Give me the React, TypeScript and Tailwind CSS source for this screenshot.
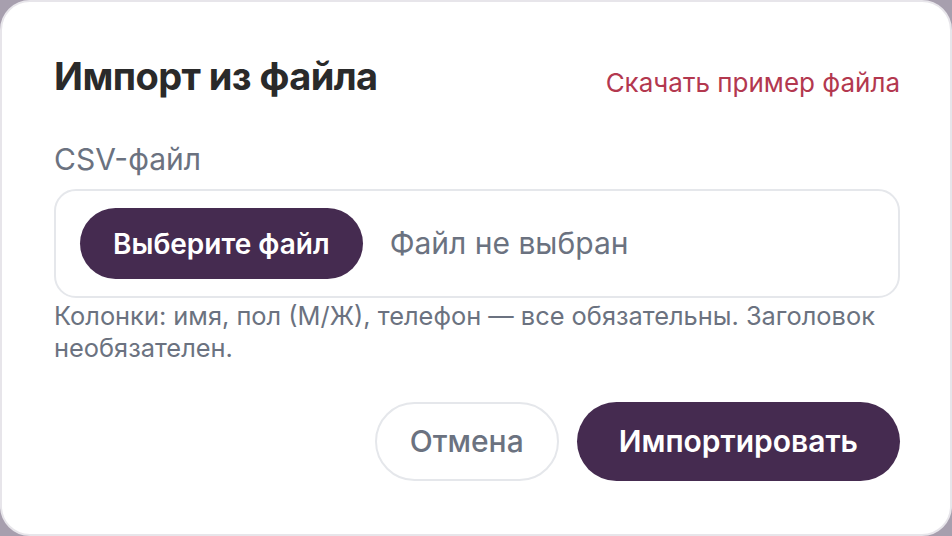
export default function App() {
  return (
    <div className="h-[536px] w-[952px] bg-[#a79fae] font-['Inter',sans-serif]">
      <div className="flex h-full flex-col rounded-[30px] border-2 border-[#e7e5ea] bg-white pl-[52px] pr-[50px] pt-[52px]">
        <div className="flex items-baseline justify-between">
          <h2 className="text-[38px] leading-[44px] font-bold tracking-[-0.015em] text-[#2a2a2a]">
            Импорт из файла
          </h2>
          <a href="#" className="relative top-[2px] text-[26px] leading-[44px] text-[#b3384f]">
            Скачать пример файла
          </a>
        </div>

        <label className="mt-[38px] text-[30px] leading-[36px] text-[#6b7280]">CSV-файл</label>

        <div className="mt-[12px] flex h-[109px] items-center gap-[27px] rounded-[22px] border-2 border-[#e5e7eb] pl-[24px]">
          <button className="h-[71px] rounded-full bg-[#452b50] px-[33px] text-[28px] font-semibold text-white">
            Выберите файл
          </button>
          <span className="text-[30px] text-[#6b7280]">Файл не выбран</span>
        </div>

        <p className="mt-[2px] text-[25.4px] leading-[32px] text-[#6b7280]">
          Колонки: имя, пол (М/Ж), телефон — все обязательны. Заголовок необязателен.
        </p>

        <div className="mt-[38px] flex justify-end gap-[18px]">
          <button className="h-[79px] rounded-full border-2 border-[#e5e7eb] px-[33px] text-[30px] font-medium text-[#6b7280]">
            Отмена
          </button>
          <button className="h-[79px] rounded-full bg-[#452b50] px-[42px] text-[30px] font-semibold text-white">
            Импортировать
          </button>
        </div>
      </div>
    </div>
  );
}
